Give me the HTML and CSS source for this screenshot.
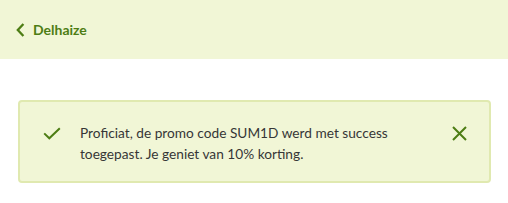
FILE: index.html
```html
<!DOCTYPE html>
<html lang="nl">
<head>
<meta charset="utf-8">
<link rel="stylesheet" href="styles.css">
</head>
<body>
<header class="topbar">
  <a class="back" href="#">
    <svg class="chev" width="9" height="14" viewBox="0 0 9 14"><path d="M7.4 1 L1.8 7 L7.4 13" fill="none" stroke="currentColor" stroke-width="2.3"/></svg>
    <span>Delhaize</span>
  </a>
</header>
<main class="content">
  <div class="alert">
    <svg class="check" width="18" height="13" viewBox="0 0 18 13"><path d="M1.2 6.4 L6.3 11.3 L16.8 1.2" fill="none" stroke="currentColor" stroke-width="2"/></svg>
    <p class="msg">Proficiat, de promo code SUM1D werd met success toegepast. Je geniet van 10% korting.</p>
    <svg class="close" width="15" height="15" viewBox="0 0 15 15"><path d="M1 1 L14 14 M14 1 L1 14" fill="none" stroke="currentColor" stroke-width="2"/></svg>
  </div>
</main>
</body>
</html>
```
FILE: styles.css
```css
* { box-sizing: border-box; }
html, body { margin: 0; padding: 0; background: #fff; }
body { font-family: Lato, "Open Sans", sans-serif; color: #363636; }
.topbar {
  height: 59px;
  background: #f1f6d6;
  display: flex;
  align-items: center;
  padding-left: 16px;
}
.back {
  display: flex;
  align-items: center;
  gap: 8px;
  color: #4d7d14;
  text-decoration: none;
  font-weight: 700;
  font-size: 14px;
}
.chev { display: block; }
.content { padding: 41px 17px 0 18px; }
.alert {
  width: 473px;
  height: 83px;
  background: #f1f6d6;
  border: 2px solid #e0e9b0;
  border-radius: 4px;
  display: flex;
  align-items: flex-start;
  padding: 20px 22px 0 23px;
}
.check { color: #4d7d14; flex: none; margin-top: 5px; }
.msg {
  margin: 0 0 0 19px;
  font-size: 13.7px;
  line-height: 21px;
  width: 330px;
  flex: none;
}
.close { color: #4d7d14; flex: none; margin-left: auto; margin-top: 4px; }
```
